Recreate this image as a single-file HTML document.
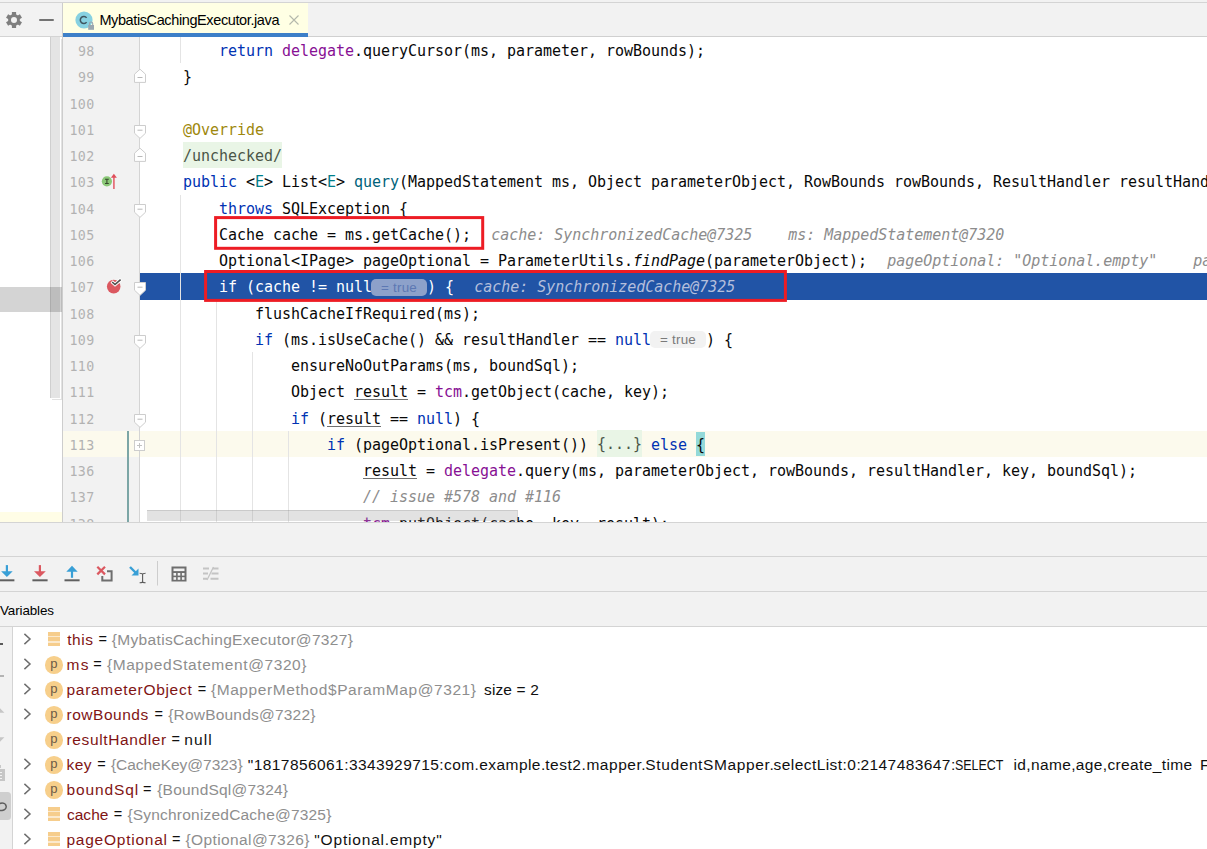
<!DOCTYPE html>
<html lang="en">
<head>
<meta charset="utf-8">
<title>MybatisCachingExecutor.java - Debug</title>
<style>
*{box-sizing:border-box;margin:0;padding:0}
html,body{width:1207px;height:849px;overflow:hidden;background:#fff}
body{position:relative;font-family:"Liberation Sans","DejaVu Sans",sans-serif;color:#000}
.abs{position:absolute}
/* ---------- top bar ---------- */
#topbar{left:0;top:0;width:1207px;height:37px;background:#f2f2f2;border-top:1px solid #f2f2f2}
#topline{left:0;top:2px;width:1207px;height:1px;background:#d4d4d4}
#leftbot{left:0;top:36px;width:62px;height:1px;background:#d4d4d4}
#vsep{left:62px;top:3px;width:1px;height:519px;background:#cdcdcd}
#tab{left:63px;top:3px;width:245px;height:30px;background:#ffffe4}
#tabul{left:63px;top:33px;width:245px;height:4px;background:#3d7fc8}
#tabtxt{left:99.4px;top:5px;height:30px;line-height:31px;font-size:14.5px;color:#000;white-space:pre;letter-spacing:-0.39px}
/* ---------- left panel ---------- */
#leftpanel{left:0;top:37px;width:62px;height:485px;background:#fff}
#lscroll{left:50px;top:37px;width:10px;height:361px;background:#e4e4e4;border-left:1px solid #cfcfcf;box-shadow:1px 1px 0 0 #fff,2px 2px 0 0 #e2e2e2}
#lsel{left:0;top:287px;width:62px;height:25px;background:rgba(0,0,0,.17)}
#lyel{left:0;top:512px;width:62px;height:10px;background:#fffde6}
/* ---------- editor ---------- */
#edwrap{left:0;top:0;width:1207px;height:522px;overflow:hidden}
.cl.ex,.cl.ex span{color:#fff}
.cl.ex .hh{color:#b4bfdc;font-style:italic;margin-left:2.2px}
.hx,.cl.ex .hx{background:#8da1ca;color:#5d78b3}
.hn{background:#f2f2f2;color:#7a7a7a}
.br{background:#93d9d9;padding:3.9px 0 2.1px}
#gutter{left:63px;top:37px;width:76px;height:485px;background:#f2f2f2}
#gutline{left:139px;top:37px;width:1px;height:485px;background:#d4d4d4}
#editor{left:140px;top:37px;width:1067px;height:485px;background:#fff;overflow:hidden}
.ln{position:absolute;left:54px;width:40.7px;text-align:right;margin-top:2.2px;height:26.25px;line-height:26.25px;font-family:"DejaVu Sans Mono","Liberation Mono",monospace;font-size:13.3px;color:#b2b2b2;white-space:pre;letter-spacing:0.4px}
.cl{position:absolute;left:147px;margin-top:1px;height:26.25px;line-height:26.25px;font-family:"DejaVu Sans Mono","Liberation Mono",monospace;font-size:15px;color:#080808;white-space:pre;letter-spacing:-0.031px}
.k{color:#0033b3}.f{color:#871094}.a{color:#9e880d}.t{color:#007e8a}.m{color:#00627a}
.h{color:#8c8c8c;font-style:italic;margin-left:2.2px}.c{color:#8c8c8c;font-style:italic}.i{font-style:italic}.u{text-decoration:underline;text-underline-offset:2.2px;text-decoration-thickness:1px;text-decoration-color:#707070}
.fold{background:#e9f5e6;color:#4b5548;padding:5.4px 0 3.4px}
.ig{position:absolute;width:1px;background:#e4e4e4}
.hint{display:inline-block;vertical-align:top;margin-top:4.3px;margin-left:-1px;height:17px;line-height:17px;width:56px;border-radius:5px;font-family:"Liberation Sans",sans-serif;font-size:13.4px;text-align:center;letter-spacing:.25px;font-style:normal}

/* ---------- bottom ---------- */
#bottom{left:0;top:522px;width:1207px;height:327px;background:#f2f2f2;overflow:hidden}
.hl{left:0;width:1207px;height:1px;background:#d4d4d4}
#varhdr{left:0;top:71px;height:34px;line-height:35px;font-size:13.4px;color:#000;white-space:pre;letter-spacing:-.1px}
#tree{left:13px;top:105px;width:1194px;height:222px;background:#fff}
#lstrip{left:0;top:105px;width:13px;height:222px;background:#f2f2f2;border-right:1px solid #d4d4d4}
.vr{left:0;width:1207px;height:25px;line-height:25px;font-size:15.5px;color:#000;white-space:pre}
.vr span{position:absolute;top:0}
.vn{color:#801414}.vt{color:#8e8e8e}.vv,.ve{color:#101010}.ve{font-size:14.5px}
.pic{left:45.1px;width:17.6px;height:17.6px;border-radius:50%;background:#f7cf8b;color:#6a5a48;font-size:13px;line-height:15.2px;text-align:center;overflow:visible}
.fic{left:47.7px;width:12.4px;height:14px;background:#fbe9cd}
.fic i{display:block;height:3.5px;margin-bottom:1.65px;background:#f6cd8c}
.fic i:last-child{margin-bottom:0}
</style>
</head>
<body>
<!-- top bar -->
<div id="topbar" class="abs"></div>
<div id="topline" class="abs"></div>
<div id="tab" class="abs"></div>
<div id="tabul" class="abs"></div>
<div class="abs" style="left:308px;top:36px;width:899px;height:1px;background:#d0d0d0"></div>
<div id="tabtxt" class="abs">MybatisCachingExecutor.java</div>
<svg class="abs" style="left:4px;top:10px" width="20" height="20" viewBox="-10 -10 20 20">
<g stroke="#7f7f7f" stroke-width="4.2" fill="none"><path d="M0 -8 V-4.6 M0 8 V4.6"/><path d="M0 -8 V-4.6 M0 8 V4.6" transform="rotate(60)"/><path d="M0 -8 V-4.6 M0 8 V4.6" transform="rotate(120)"/></g>
<circle r="4.45" fill="none" stroke="#7f7f7f" stroke-width="2.9"/>
</svg>
<div class="abs" style="left:38.5px;top:19px;width:15px;height:2px;background:#737373;border-radius:1px"></div>
<svg class="abs" style="left:74px;top:10px" width="22" height="22" viewBox="0 0 22 22">
<circle cx="10" cy="10" r="8.6" fill="#87d1e1"/>
<path d="M12.6 7.9 A3.5 3.5 0 1 0 12.6 12.1" fill="none" stroke="#3f5560" stroke-width="1.5"/>
<rect x="14.2" y="15" width="5.8" height="4.8" fill="#9aa7b0"/>
<path d="M15.5 15.2 V13.6 A1.6 1.6 0 0 1 18.7 13.6 V15.2" fill="none" stroke="#9aa7b0" stroke-width="1.1"/>
</svg>
<svg class="abs" style="left:288px;top:14px" width="12" height="12" viewBox="0 0 12 12"><path d="M1.5 1.5 L10.5 10.5 M10.5 1.5 L1.5 10.5" stroke="#b4b8ac" stroke-width="1.1" fill="none"/></svg>


<!-- left panel -->
<div id="leftpanel" class="abs"></div>
<div id="lscroll" class="abs"></div>
<div id="lyel" class="abs"></div>
<div id="lsel" class="abs"></div>
<div id="leftbot" class="abs"></div>
<div id="vsep" class="abs"></div>

<!-- editor -->
<div id="editor" class="abs"></div>
<div id="gutter" class="abs"></div>

<div id="edwrap" class="abs">
<div class="abs" style="left:63px;top:430.75px;width:1144px;height:26.25px;background:#fcfaed"></div>
<div class="abs" style="left:140px;top:273.25px;width:1067px;height:26.25px;background:#2154a6"></div>
<div class="ig" style="left:180px;top:37.0px;height:26.25px"></div>
<div class="ig" style="left:180px;top:194.5px;height:341.25px"></div>
<div class="ig" style="left:216px;top:299.5px;height:236.25px"></div>
<div class="ig" style="left:252px;top:352.0px;height:183.75px"></div>
<div class="ig" style="left:288px;top:430.75px;height:105.0px"></div>
<div class="ln" style="top:37.0px">98</div>
<div class="cl" style="top:37.0px">        <span class="k">return</span> <span class="f">delegate</span>.queryCursor(ms, parameter, rowBounds);</div>
<div class="ln" style="top:63.25px">99</div>
<div class="cl" style="top:63.25px">    }</div>
<div class="ln" style="top:89.5px">100</div>
<div class="ln" style="top:115.75px">101</div>
<div class="cl" style="top:115.75px">    <span class="a">@Override</span></div>
<div class="ln" style="top:142.0px">102</div>
<div class="cl" style="top:142.0px">    <span class="fold">/unchecked/</span></div>
<div class="ln" style="top:168.25px">103</div>
<div class="cl" style="top:168.25px">    <span class="k">public</span> &lt;<span class="t">E</span>&gt; List&lt;<span class="t">E</span>&gt; <span class="m">query</span>(MappedStatement ms, Object parameterObject, RowBounds rowBounds, ResultHandler resultHandler, CacheKey key, BoundSql boundSql)</div>
<div class="ln" style="top:194.5px">104</div>
<div class="cl" style="top:194.5px">        <span class="k">throws</span> SQLException {</div>
<div class="ln" style="top:220.75px">105</div>
<div class="cl" style="top:220.75px">        Cache cache = ms.getCache();<span class="h">  cache: SynchronizedCache@7325    ms: MappedStatement@7320</span></div>
<div class="ln" style="top:247.0px">106</div>
<div class="cl" style="top:247.0px">        Optional&lt;IPage&gt; pageOptional = ParameterUtils.<span class="i">findPage</span>(parameterObject);<span class="h">  pageOptional: "Optional.empty"    parameterObject: MapperMethod$ParamMap@7321</span></div>
<div class="ln" style="top:273.25px">107</div>
<div class="cl ex" style="top:273.25px">        if (cache != null<span class="hint hx">= true</span>) {<span class="hh">  cache: SynchronizedCache@7325</span></div>
<div class="ln" style="top:299.5px">108</div>
<div class="cl" style="top:299.5px">            flushCacheIfRequired(ms);</div>
<div class="ln" style="top:325.75px">109</div>
<div class="cl" style="top:325.75px">            <span class="k">if</span> (ms.isUseCache() &amp;&amp; resultHandler == <span class="k">null</span><span class="hint hn">= true</span>) {</div>
<div class="ln" style="top:352.0px">110</div>
<div class="cl" style="top:352.0px">                ensureNoOutParams(ms, boundSql);</div>
<div class="ln" style="top:378.25px">111</div>
<div class="cl" style="top:378.25px">                Object <span class="u">result</span> = <span class="f">tcm</span>.getObject(cache, key);</div>
<div class="ln" style="top:404.5px">112</div>
<div class="cl" style="top:404.5px">                <span class="k">if</span> (<span class="u">result</span> == <span class="k">null</span>) {</div>
<div class="ln" style="top:430.75px">113</div>
<div class="cl" style="top:430.75px">                    <span class="k">if</span> (pageOptional.isPresent()) <span class="fold">{...}</span> <span class="k">else</span> <span class="br">{</span></div>
<div class="ln" style="top:457.0px">136</div>
<div class="cl" style="top:457.0px">                        <span class="u">result</span> = <span class="f">delegate</span>.query(ms, parameterObject, rowBounds, resultHandler, key, boundSql);</div>
<div class="ln" style="top:483.25px">137</div>
<div class="cl" style="top:483.25px">                        <span class="c">// issue #578 and #116</span></div>
<div class="ln" style="top:509.5px">138</div>
<div class="cl" style="top:509.5px">                        <span class="f">tcm</span>.putObject(cache, key, <span class="u">result</span>);</div>
<div id="gutline" class="abs"></div>
<svg class="abs" style="left:133px;top:67.95px" width="14" height="17" viewBox="0 0 14 17"><path d="M1.5 14.4 H12.5 V6.2 L7 1.2 L1.5 6.2 Z" fill="#fff" stroke="#cdcdcd" stroke-width="1"/><path d="M4.5 9.5 H9.5" stroke="#b8b8b8" stroke-width="1"/></svg>
<svg class="abs" style="left:133px;top:123.95px" width="14" height="17" viewBox="0 0 14 17"><path d="M1.5 1.5 H12.5 V9.2 L7 14.4 L1.5 9.2 Z" fill="#fff" stroke="#cdcdcd" stroke-width="1"/><path d="M4.5 6.2 H9.5" stroke="#b8b8b8" stroke-width="1"/></svg>
<svg class="abs" style="left:133px;top:146.70px" width="14" height="17" viewBox="0 0 14 17"><path d="M1.5 14.4 H12.5 V6.2 L7 1.2 L1.5 6.2 Z" fill="#fff" stroke="#cdcdcd" stroke-width="1"/><path d="M4.5 9.5 H9.5" stroke="#b8b8b8" stroke-width="1"/></svg>
<svg class="abs" style="left:133px;top:202.70px" width="14" height="17" viewBox="0 0 14 17"><path d="M1.5 1.5 H12.5 V9.2 L7 14.4 L1.5 9.2 Z" fill="#fff" stroke="#cdcdcd" stroke-width="1"/><path d="M4.5 6.2 H9.5" stroke="#b8b8b8" stroke-width="1"/></svg>
<svg class="abs" style="left:133px;top:281.45px" width="14" height="17" viewBox="0 0 14 17"><path d="M1.5 1.5 H12.5 V9.2 L7 14.4 L1.5 9.2 Z" fill="#fff" stroke="#cdcdcd" stroke-width="1"/><path d="M4.5 6.2 H9.5" stroke="#b8b8b8" stroke-width="1"/></svg>
<svg class="abs" style="left:133px;top:333.95px" width="14" height="17" viewBox="0 0 14 17"><path d="M1.5 1.5 H12.5 V9.2 L7 14.4 L1.5 9.2 Z" fill="#fff" stroke="#cdcdcd" stroke-width="1"/><path d="M4.5 6.2 H9.5" stroke="#b8b8b8" stroke-width="1"/></svg>
<svg class="abs" style="left:133px;top:412.70px" width="14" height="17" viewBox="0 0 14 17"><path d="M1.5 1.5 H12.5 V9.2 L7 14.4 L1.5 9.2 Z" fill="#fff" stroke="#cdcdcd" stroke-width="1"/><path d="M4.5 6.2 H9.5" stroke="#b8b8b8" stroke-width="1"/></svg>
<svg class="abs" style="left:133px;top:439.25px" width="14" height="14" viewBox="0 0 14 14"><rect x="1.5" y="1.5" width="10" height="10" fill="#fff" stroke="#cdcdcd"/><path d="M4 6.5 H9 M6.5 4 V9" stroke="#c2c2c2" stroke-width="1"/></svg>
<div class="abs" style="left:127px;top:430.75px;width:1.8px;height:100px;background:#7ca6a6"></div>
<svg class="abs" style="left:100px;top:172px" width="20" height="20" viewBox="0 0 20 20"><circle cx="6.9" cy="9.3" r="5.1" fill="#8bc878"/><path d="M5 7.3 H8.8 M5 11.5 H8.8 M6.9 7.3 V11.5" stroke="#36482c" stroke-width="1.1" fill="none"/><path d="M13.9 17 V5" stroke="#e5737c" stroke-width="1.8"/><path d="M10.9 5.8 L13.9 1.8 L16.9 5.8 Z" fill="#df4f5a"/></svg>
<svg class="abs" style="left:104px;top:276px" width="22" height="22" viewBox="0 0 22 22"><circle cx="9.7" cy="10.6" r="6.8" fill="#db5860"/><path d="M7.6 5.6 L11 8.6 L17.2 3.2" fill="none" stroke="#fff" stroke-width="3.4"/><path d="M8.2 6 L11 8.5 L16.6 3.6" fill="none" stroke="#4d4d4d" stroke-width="1.6"/></svg>
<svg class="abs" style="left:0;top:0" width="1207" height="522" viewBox="0 0 1207 522"><g fill="none" stroke="#ed1c24" stroke-width="3"><rect x="215.6" y="217.6" width="267.1" height="30.7"/><rect x="205.6" y="271.5" width="579.8" height="28.9"/></g></svg>

<div class="abs" style="left:147px;top:510px;width:371px;height:11px;background:rgba(150,150,150,.28);border-top:1px solid rgba(120,120,120,.22);border-right:1px solid rgba(120,120,120,.12)"></div>

</div>

<div id="bottom" class="abs">
<div class="abs hl" style="top:0"></div><div class="abs hl" style="top:34px"></div><div class="abs hl" style="top:69px"></div><div class="abs hl" style="top:104px"></div>
<svg class="abs" style="left:0;top:35px" width="240" height="34" viewBox="0 557 240 34">
<!-- step into (blue down) -->
<g fill="none" stroke-linecap="butt">
<path d="M0 580.3 H14.4" stroke="#606060" stroke-width="2"/>
<path d="M6.9 565.1 V572" stroke="#389fd6" stroke-width="2.2"/>
<path d="M1.1 571.3 H12.7 L6.9 577.1 Z" fill="#389fd6" stroke="none"/>
<!-- force step into (red down) -->
<path d="M32.4 580.3 H47.6" stroke="#606060" stroke-width="2"/>
<path d="M39.9 565.1 V572" stroke="#db5860" stroke-width="2.2"/>
<path d="M34 571.3 H45.8 L39.9 577.1 Z" fill="#db5860" stroke="none"/>
<!-- step out (blue up) -->
<path d="M64.5 580.3 H79.6" stroke="#606060" stroke-width="2"/>
<path d="M72 577.8 V571" stroke="#389fd6" stroke-width="2.2"/>
<path d="M66.3 571.8 H77.7 L72 565.7 Z" fill="#389fd6" stroke="none"/>
<!-- drop frame -->
<path d="M102.3 576 V580.5 H111.6 V571.2 H107" stroke="#6e6e6e" stroke-width="2"/>
<path d="M97.3 566.7 L105 574.4 M105 566.7 L97.3 574.4" stroke="#db5860" stroke-width="2.2"/>
<!-- run to cursor -->
<path d="M130 567 L136.5 573.5" stroke="#389fd6" stroke-width="2.4"/>
<path d="M138.5 568.5 V575.5 H131.5 Z" fill="#389fd6" stroke="none"/>
<path d="M142.6 573.5 V582.5 M139.6 573.2 Q142.6 573.2 142.6 574.5 Q142.6 573.2 145.6 573.2 M139.6 582.8 Q142.6 582.8 142.6 581.5 Q142.6 582.8 145.6 582.8" stroke="#5a5a5a" stroke-width="1.1"/>
<!-- separator -->
<path d="M157.5 561 V585.5" stroke="#cdcdcd" stroke-width="1"/>
</g>
<!-- evaluate (calculator) -->
<rect x="171.5" y="566.5" width="15" height="15" fill="#6e6e6e"/>
<g fill="#f2f2f2"><rect x="173.5" y="568.5" width="11" height="2.6"/>
<rect x="173.5" y="573" width="2.6" height="2.6"/><rect x="177.7" y="573" width="2.6" height="2.6"/><rect x="181.9" y="573" width="2.6" height="2.6"/>
<rect x="173.5" y="577.2" width="2.6" height="2.6"/><rect x="177.7" y="577.2" width="2.6" height="2.6"/><rect x="181.9" y="577.2" width="2.6" height="2.6"/></g>
<!-- trace (disabled) -->
<g fill="none" stroke="#c4c4c4" stroke-width="2">
<path d="M203 568.5 H209 M203 573.5 H208 M203 578.7 H207"/>
<path d="M212.5 568.5 H218.5 M211.5 573.5 H218.5 M210.5 578.7 H218.5"/>
<path d="M213.5 567 L207 580" stroke-width="1.3"/>
</g>
</svg>

<div id="varhdr" class="abs">Variables</div>
<div id="tree" class="abs"></div>
<div id="lstrip" class="abs"></div>
<div class="abs" style="left:0;top:120.8px;width:3.4px;height:2.2px;background:#5a5a5a"></div>
<div class="abs" style="left:0;top:153px;width:3.6px;height:2px;background:#b4b4b4"></div>
<svg class="abs" style="left:0;top:184px" width="8" height="8" viewBox="0 0 8 8"><path d="M0 6.8 L0 2.2 L4.4 6.8 Z" fill="#c6c6c6"/></svg>
<svg class="abs" style="left:0;top:213px" width="8" height="8" viewBox="0 0 8 8"><path d="M0 2.2 L4.4 2.2 L0 6.8 Z" fill="#c6c6c6"/></svg>
<div class="abs" style="left:0;top:243px;width:1.2px;height:3px;background:#c8c8c8"></div>
<div class="abs" style="left:0;top:247px;width:4.6px;height:12.2px;background:#c6c6c6"></div>
<div class="abs" style="left:0;top:250px;width:2.4px;height:1.2px;background:#f2f2f2"></div>
<div class="abs" style="left:0;top:252.8px;width:2.4px;height:1.2px;background:#f2f2f2"></div>
<div class="abs" style="left:0;top:255.6px;width:2.4px;height:1.2px;background:#f2f2f2"></div>
<div class="abs" style="left:0;top:270px;width:10.6px;height:28.4px;background:#cfcfcf;border-radius:0 3.5px 3.5px 0"></div>
<svg class="abs" style="left:0;top:278px" width="10" height="14" viewBox="0 0 10 14"><ellipse cx="1.6" cy="6.8" rx="4.6" ry="3.7" fill="none" stroke="#5e5e5e" stroke-width="1.5" transform="rotate(-8 1.6 6.8)"/></svg>

<svg class="abs chev" style="left:22px;top:110px" width="12" height="14" viewBox="0 0 12 14"><path d="M2.4 1.9 L8 7 L2.4 12.1" fill="none" stroke="#6e6e6e" stroke-width="1.5"/></svg>
<div class="abs fic" style="top:110.3px"><i></i><i></i><i></i></div>
<div class="abs vr" style="top:105px"><span class="vn" style="left:67.2px;letter-spacing:0.525px">this</span><span class="ve" style="left:98.6px">=</span><span class="vt" style="left:111.8px;letter-spacing:0.324px">{MybatisCachingExecutor@7327}</span></div>
<svg class="abs chev" style="left:22px;top:135px" width="12" height="14" viewBox="0 0 12 14"><path d="M2.4 1.9 L8 7 L2.4 12.1" fill="none" stroke="#6e6e6e" stroke-width="1.5"/></svg>
<div class="abs pic" style="top:134.3px">p</div>
<div class="abs vr" style="top:130px"><span class="vn" style="left:66.5px;letter-spacing:1.328px">ms</span><span class="ve" style="left:93.3px">=</span><span class="vt" style="left:106.9px;letter-spacing:0.589px">{MappedStatement@7320}</span></div>
<svg class="abs chev" style="left:22px;top:160px" width="12" height="14" viewBox="0 0 12 14"><path d="M2.4 1.9 L8 7 L2.4 12.1" fill="none" stroke="#6e6e6e" stroke-width="1.5"/></svg>
<div class="abs pic" style="top:159.3px">p</div>
<div class="abs vr" style="top:155px"><span class="vn" style="left:66.5px;letter-spacing:0.696px">parameterObject</span><span class="ve" style="left:197.7px">=</span><span class="vt" style="left:210.9px;letter-spacing:0.587px">{MapperMethod$ParamMap@7321}</span><span class="vv" style="left:484.0px;letter-spacing:0.134px">size = 2</span></div>
<svg class="abs chev" style="left:22px;top:185px" width="12" height="14" viewBox="0 0 12 14"><path d="M2.4 1.9 L8 7 L2.4 12.1" fill="none" stroke="#6e6e6e" stroke-width="1.5"/></svg>
<div class="abs pic" style="top:184.3px">p</div>
<div class="abs vr" style="top:180px"><span class="vn" style="left:66.5px;letter-spacing:0.519px">rowBounds</span><span class="ve" style="left:154.5px">=</span><span class="vt" style="left:168.2px;letter-spacing:0.203px">{RowBounds@7322}</span></div>
<div class="abs pic" style="top:209.3px">p</div>
<div class="abs vr" style="top:205px"><span class="vn" style="left:66.5px;letter-spacing:0.626px">resultHandler</span><span class="ve" style="left:171.4px">=</span><span class="vv" style="left:184.2px;letter-spacing:1.120px">null</span></div>
<svg class="abs chev" style="left:22px;top:235px" width="12" height="14" viewBox="0 0 12 14"><path d="M2.4 1.9 L8 7 L2.4 12.1" fill="none" stroke="#6e6e6e" stroke-width="1.5"/></svg>
<div class="abs pic" style="top:234.3px">p</div>
<div class="abs vr" style="top:230px"><span class="vn" style="left:66.5px;letter-spacing:0.438px">key</span><span class="ve" style="left:97.2px">=</span><span class="vt" style="left:110.9px;letter-spacing:-0.028px">{CacheKey@7323}</span><span class="vv" style="left:247.8px;letter-spacing:0.423px">"1817856061:3343929715:com.example.</span><span class="vv" style="left:545.2px;letter-spacing:0.548px">test2.mapper.</span><span class="vv" style="left:645.3px;letter-spacing:0.616px">StudentSMapper.</span><span class="vv" style="left:773.5px;letter-spacing:0.445px">selectList:0:</span><span class="vv" style="left:860.5px;letter-spacing:0.418px">2147483647:</span><span class="vv" style="left:954.8px;transform:scaleX(0.804);transform-origin:0 0">SELECT</span><span class="vv" style="left:1013.5px;letter-spacing:0.363px">id,name,age,create_time</span><span class="vv" style="left:1200.0px;letter-spacing:0.3px">FROM student_s  WHERE (age = ?):18:MybatisSqlSessionFactoryBean"</span></div>
<svg class="abs chev" style="left:22px;top:260px" width="12" height="14" viewBox="0 0 12 14"><path d="M2.4 1.9 L8 7 L2.4 12.1" fill="none" stroke="#6e6e6e" stroke-width="1.5"/></svg>
<div class="abs pic" style="top:259.3px">p</div>
<div class="abs vr" style="top:255px"><span class="vn" style="left:66.5px;letter-spacing:0.869px">boundSql</span><span class="ve" style="left:143.1px">=</span><span class="vt" style="left:157.2px;letter-spacing:0.215px">{BoundSql@7324}</span></div>
<svg class="abs chev" style="left:22px;top:285px" width="12" height="14" viewBox="0 0 12 14"><path d="M2.4 1.9 L8 7 L2.4 12.1" fill="none" stroke="#6e6e6e" stroke-width="1.5"/></svg>
<div class="abs fic" style="top:285.3px"><i></i><i></i><i></i></div>
<div class="abs vr" style="top:280px"><span class="vn" style="left:66.9px;letter-spacing:0.056px">cache</span><span class="ve" style="left:113.8px">=</span><span class="vt" style="left:127.4px;letter-spacing:0.204px">{SynchronizedCache@7325}</span></div>
<svg class="abs chev" style="left:22px;top:310px" width="12" height="14" viewBox="0 0 12 14"><path d="M2.4 1.9 L8 7 L2.4 12.1" fill="none" stroke="#6e6e6e" stroke-width="1.5"/></svg>
<div class="abs fic" style="top:310.3px"><i></i><i></i><i></i></div>
<div class="abs vr" style="top:305px"><span class="vn" style="left:66.5px;letter-spacing:0.753px">pageOptional</span><span class="ve" style="left:172.1px">=</span><span class="vt" style="left:185.4px;letter-spacing:0.406px">{Optional@7326}</span><span class="vv" style="left:314.3px;letter-spacing:0.809px">"Optional.empty"</span></div>
</div>
</body>
</html>
